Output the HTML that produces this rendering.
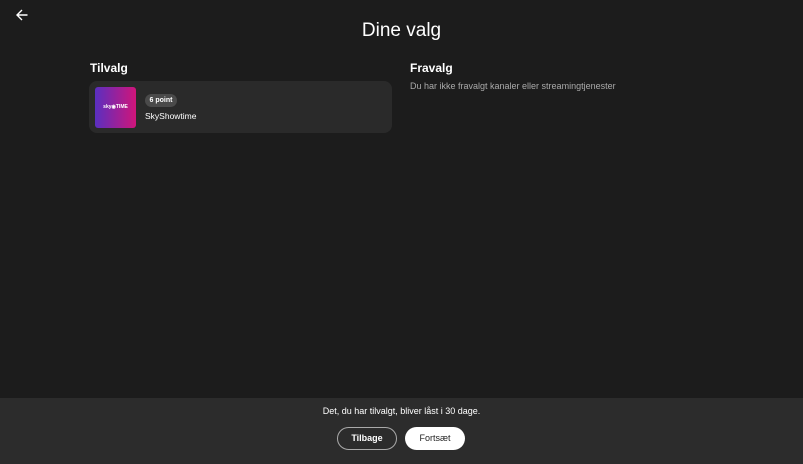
<!DOCTYPE html>
<html><head><style>
body{margin:0;width:803px;height:464px;background:#1c1c1c;font-family:"Liberation Sans",sans-serif;color:#fff;position:relative;overflow:hidden}
.a{position:absolute}
</style></head><body>
<svg class="a" style="left:15px;top:8px" width="14" height="14" viewBox="0 0 14 14"><path d="M12.5 7H2M7 2L2 7l5 5" stroke="#fff" stroke-width="1.4" fill="none"/></svg>
<div class="a" style="left:0;width:803px;top:20px;text-align:center;font-size:19px">Dine valg</div>
<div class="a" style="left:90px;top:61px;font-size:12px;font-weight:bold">Tilvalg</div>
<div class="a" style="left:410px;top:61px;font-size:12px;font-weight:bold">Fravalg</div>
<div class="a" style="left:410px;top:81px;font-size:9px;color:#aaa">Du har ikke fravalgt kanaler eller streamingtjenester</div>
<div class="a" style="left:89px;top:81px;width:303px;height:52px;background:#2a2a2a;border-radius:8px"></div>
<div class="a" style="left:95px;top:87px;width:41px;height:41px;border-radius:3px;background:linear-gradient(90deg,#5a2fc0,#d0157a);font-size:5px;font-weight:bold;text-align:center;line-height:41px">sky◉TIME</div>
<div class="a" style="left:145px;top:94px;width:32px;height:13px;border-radius:7px;background:#4a4a4a;font-size:7px;font-weight:bold;text-align:center;line-height:13px">6 point</div>
<div class="a" style="left:145px;top:111px;font-size:8.5px">SkyShowtime</div>
<div class="a" style="left:0;top:398px;width:803px;height:66px;background:#2c2c2c"></div>
<div class="a" style="left:0;width:803px;top:406px;text-align:center;font-size:9px">Det, du har tilvalgt, bliver låst i 30 dage.</div>
<div class="a" style="left:337px;top:427px;width:58px;height:21px;border:1px solid #aaa;border-radius:12px;font-size:9px;font-weight:bold;text-align:center;line-height:21px">Tilbage</div>
<div class="a" style="left:405px;top:427px;width:60px;height:23px;background:#fff;color:#222;border-radius:12px;font-size:9px;text-align:center;line-height:23px">Fortsæt</div>
</body></html>
